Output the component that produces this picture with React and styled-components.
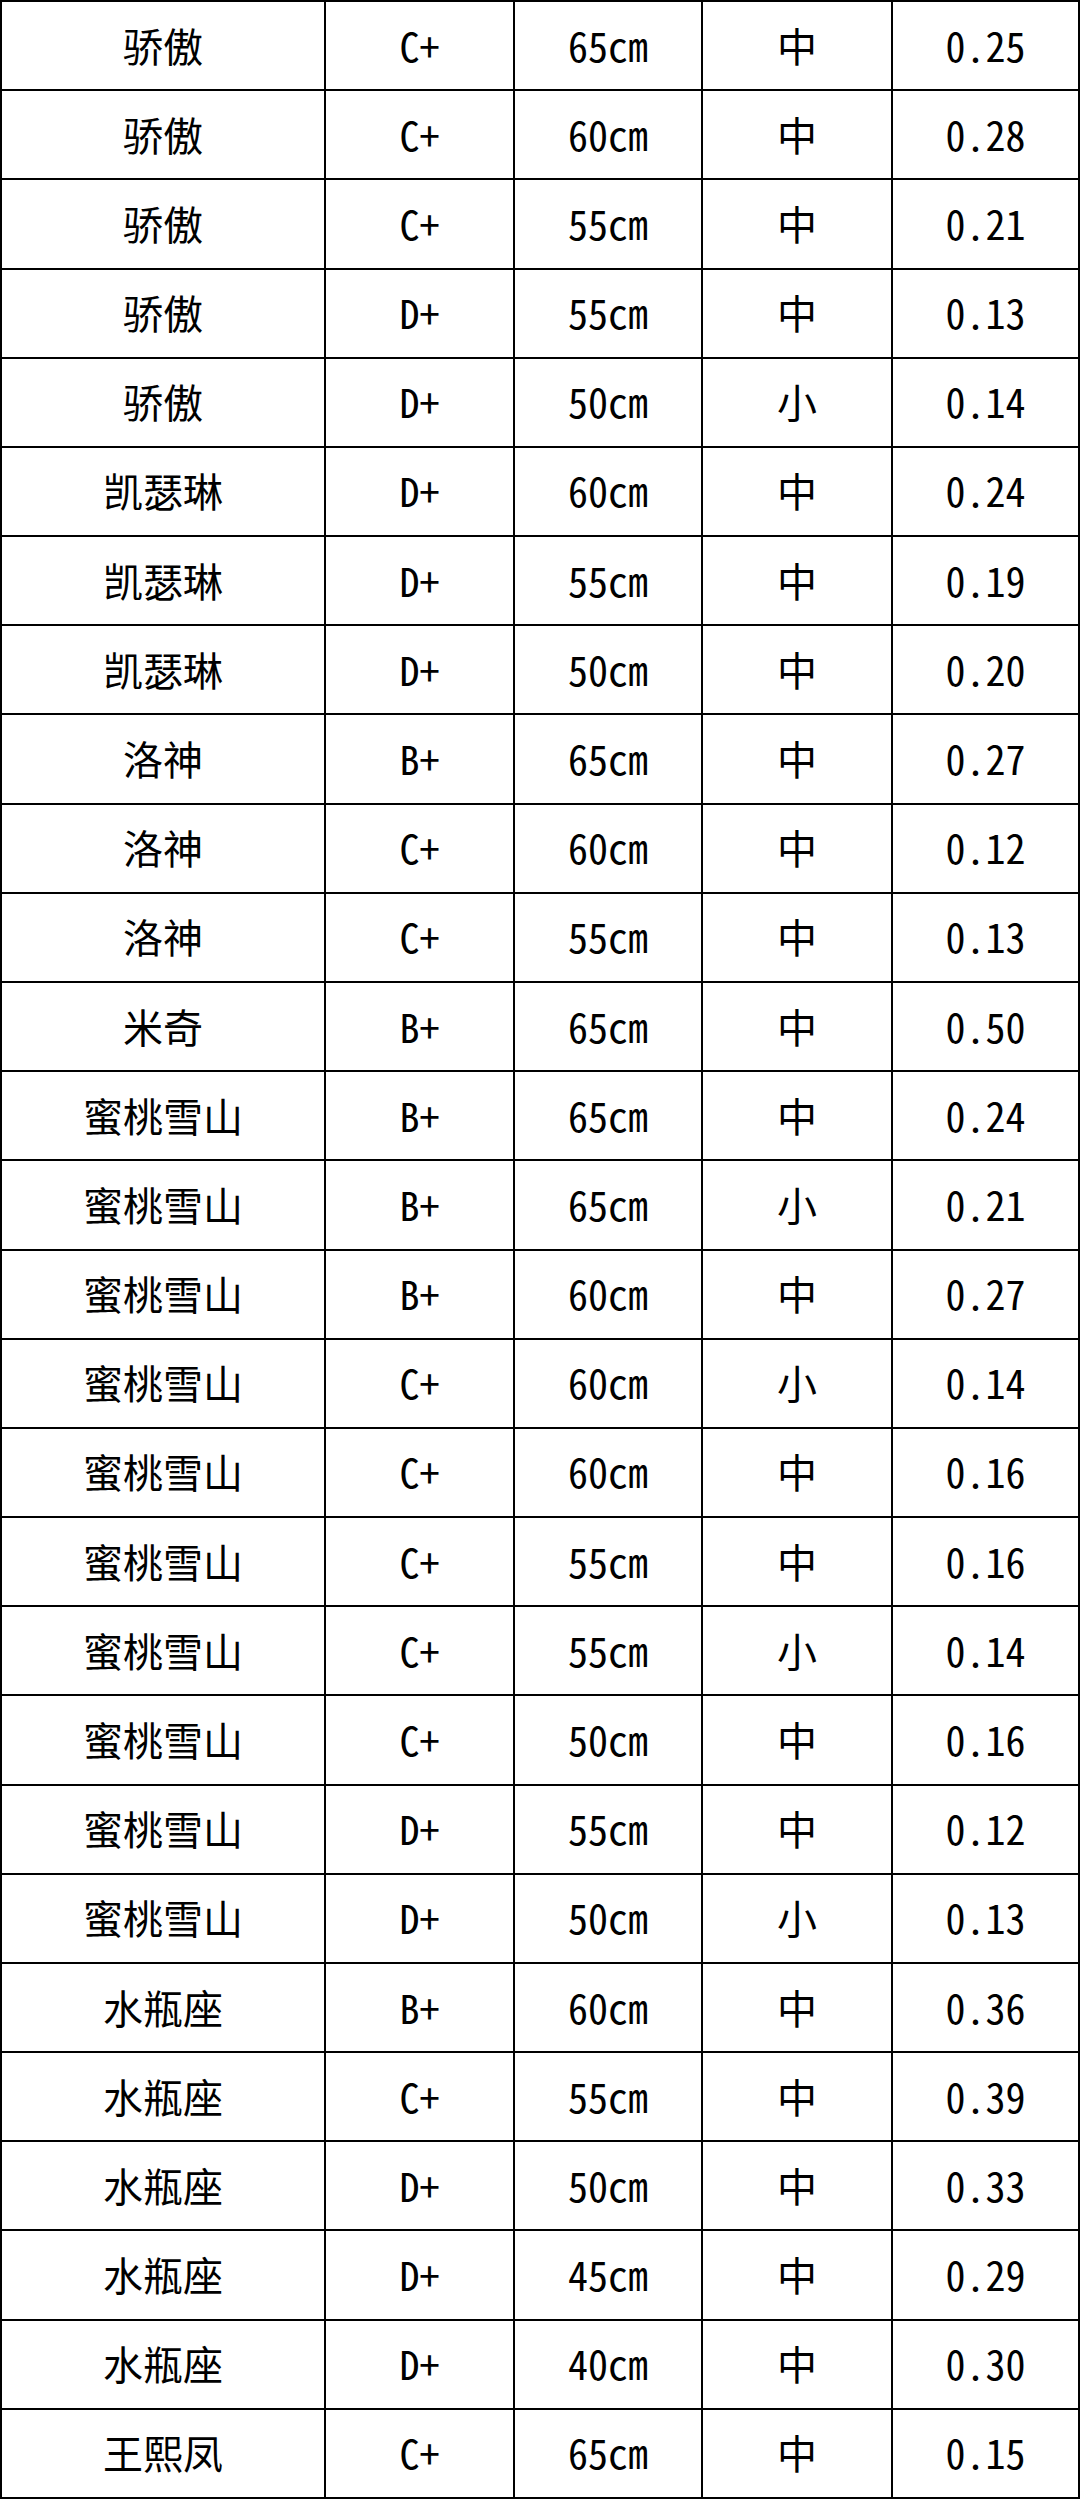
import React from "react";
import styled, { createGlobalStyle } from "styled-components";

const Global = createGlobalStyle`
  html, body { margin: 0; padding: 0; background: #fff; }
  #root { width: 1080px; }
`;

const Table = styled.div`
  width: 1080px;
  height: 2499px;
  box-sizing: border-box;
  display: grid;
  grid-template-columns: 322fr 187fr 186fr 188fr 185fr;
  grid-auto-rows: 1fr;
  gap: 2px;
  padding: 2px;
  background: #000;
`;

const Cell = styled.div`
  background: #fff;
  display: flex;
  align-items: center;
  justify-content: center;
  font-family: "Noto Sans CJK SC", "Noto Sans", sans-serif;
  font-feature-settings: "hwid";
  font-size: 40px;
  color: #000;
  line-height: 1;
  padding-bottom: 2px;
`;

const rows = [
  ["骄傲", "C+", "65cm", "中", "0.25"],
  ["骄傲", "C+", "60cm", "中", "0.28"],
  ["骄傲", "C+", "55cm", "中", "0.21"],
  ["骄傲", "D+", "55cm", "中", "0.13"],
  ["骄傲", "D+", "50cm", "小", "0.14"],
  ["凯瑟琳", "D+", "60cm", "中", "0.24"],
  ["凯瑟琳", "D+", "55cm", "中", "0.19"],
  ["凯瑟琳", "D+", "50cm", "中", "0.20"],
  ["洛神", "B+", "65cm", "中", "0.27"],
  ["洛神", "C+", "60cm", "中", "0.12"],
  ["洛神", "C+", "55cm", "中", "0.13"],
  ["米奇", "B+", "65cm", "中", "0.50"],
  ["蜜桃雪山", "B+", "65cm", "中", "0.24"],
  ["蜜桃雪山", "B+", "65cm", "小", "0.21"],
  ["蜜桃雪山", "B+", "60cm", "中", "0.27"],
  ["蜜桃雪山", "C+", "60cm", "小", "0.14"],
  ["蜜桃雪山", "C+", "60cm", "中", "0.16"],
  ["蜜桃雪山", "C+", "55cm", "中", "0.16"],
  ["蜜桃雪山", "C+", "55cm", "小", "0.14"],
  ["蜜桃雪山", "C+", "50cm", "中", "0.16"],
  ["蜜桃雪山", "D+", "55cm", "中", "0.12"],
  ["蜜桃雪山", "D+", "50cm", "小", "0.13"],
  ["水瓶座", "B+", "60cm", "中", "0.36"],
  ["水瓶座", "C+", "55cm", "中", "0.39"],
  ["水瓶座", "D+", "50cm", "中", "0.33"],
  ["水瓶座", "D+", "45cm", "中", "0.29"],
  ["水瓶座", "D+", "40cm", "中", "0.30"],
  ["王熙凤", "C+", "65cm", "中", "0.15"],
];

export default function App() {
  return (
    <>
      <Global />
      <Table>
        {rows.map((r, i) =>
          r.map((v, j) => <Cell key={`${i}-${j}`}>{v}</Cell>)
        )}
      </Table>
    </>
  );
}
